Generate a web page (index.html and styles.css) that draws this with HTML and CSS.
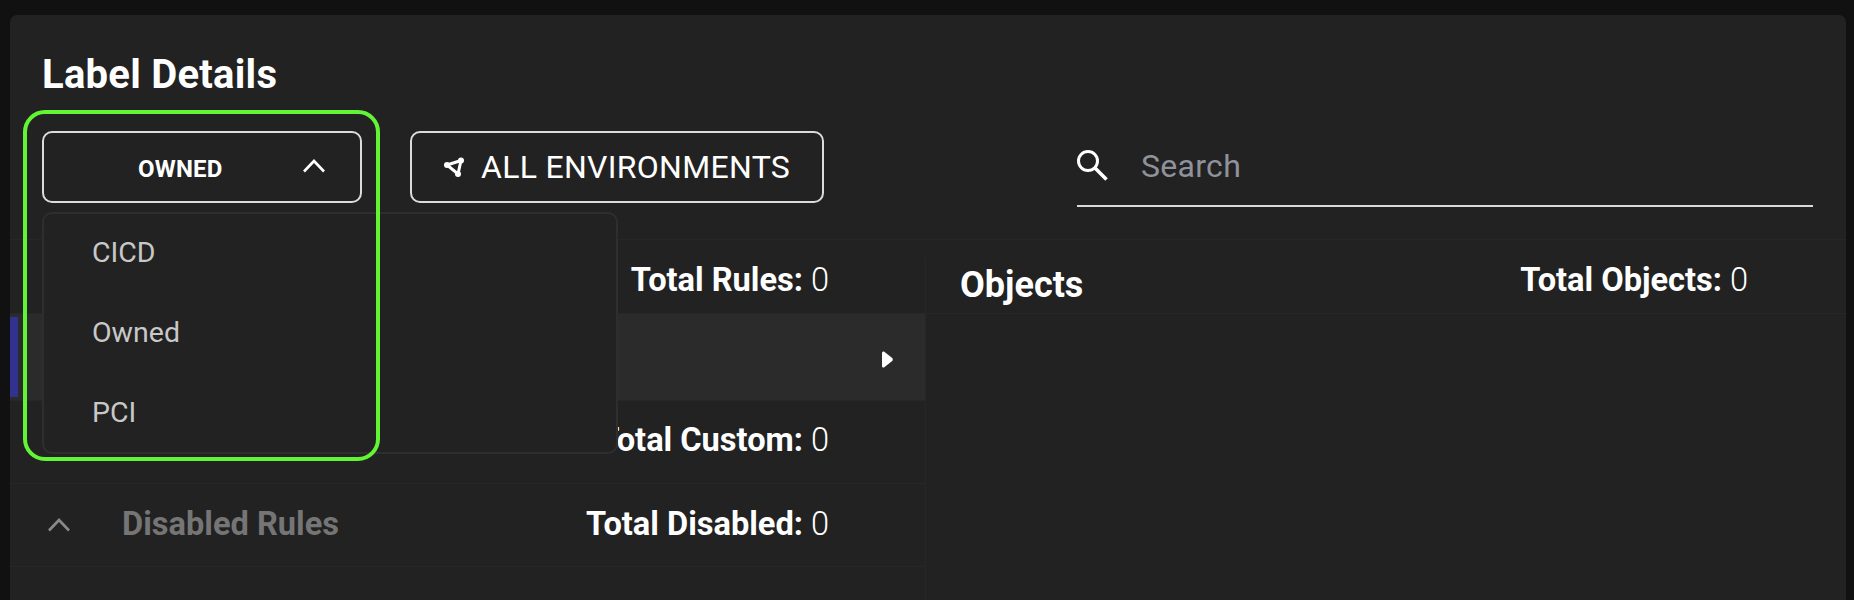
FILE: index.html
```html
<!DOCTYPE html>
<html lang="en">

<head>
    <title>Label Details</title>
    <link rel="stylesheet" href="styles.css">
</head>

<body>
    <div class="panel">
        <h1 class="title">Label Details</h1>

        <div class="toolbar">
            <button class="btn btn-select">
                <span class="select-text">OWNED</span>
                <svg class="select-chevron" width="22" height="14" viewBox="0 0 22 14">
                    <polyline points="1,12.5 11,2 21,12.5" fill="none" stroke="#fff" stroke-width="2.6" />
                </svg>
            </button>
            <button class="btn btn-env">
                <svg width="20" height="20" viewBox="0 0 20 20">
                    <polygon points="3,8 17,3.5 14,17" fill="none" stroke="#fff" stroke-width="3" />
                    <circle cx="3" cy="8" r="3" fill="#fff" />
                    <circle cx="17" cy="3.5" r="3" fill="#fff" />
                    <circle cx="14" cy="17" r="3" fill="#fff" />
                </svg>
                <span>ALL ENVIRONMENTS</span>
            </button>
            <div class="search">
                <svg width="31" height="31" viewBox="0 0 31 31">
                    <circle cx="11" cy="11" r="9.5" fill="none" stroke="#fff" stroke-width="3" />
                    <line x1="18" y1="18" x2="29.5" y2="29.5" stroke="#fff" stroke-width="3.6" />
                </svg>
                <span class="search-text">Search</span>
            </div>
        </div>

        <div class="columns">
            <div class="rules">
                <div class="rules-head">
                    <div class="total"><b>Total Rules:</b> 0</div>
                </div>
                <div class="row row-active">
                    <span class="row-bar"></span>
                    <svg class="row-arrow" width="11" height="17" viewBox="0 0 11 17">
                        <path d="M2 0.5 L10.5 7.2 Q11 8.5 10.5 9.8 L2 16.5 Q0 17 0 15 V2 Q0 0 2 0.5 Z" fill="#fff" />
                    </svg>
                </div>
                <div class="row row-custom">
                    <div class="total"><b>Total Custom:</b> 0</div>
                </div>
                <div class="row row-disabled">
                    <svg class="row-chevron" width="22" height="14" viewBox="0 0 22 14">
                        <polyline points="1,12.5 11,2 21,12.5" fill="none" stroke="#8a8a8a" stroke-width="2.6" />
                    </svg>
                    <span class="row-label">Disabled Rules</span>
                    <div class="total"><b>Total Disabled:</b> 0</div>
                </div>
            </div>

            <div class="objects">
                <div class="objects-head">
                    <div class="objects-title">Objects</div>
                    <div class="total"><b>Total Objects:</b> 0</div>
                </div>
            </div>
        </div>

        <ul class="menu">
            <li>CICD</li>
            <li>Owned</li>
            <li>PCI</li>
        </ul>

        <div class="highlight"></div>
    </div>
</body>

</html>
```

FILE: styles.css
```css
* {
    padding: 0;
    margin: 0;
    box-sizing: border-box;
}

body {
    height: 600px;
    overflow: hidden;
    background: #111111;
    padding: 15px 8px 0 10px;
    font-family: Roboto, sans-serif;
    color: #ffffff;
}

.panel {
    position: relative;
    height: 585px;
    background: #222222;
    border-radius: 7px 7px 0 0;
    overflow: hidden;
}

.title {
    padding: 39px 0 0 32px;
    font-size: 40px;
    line-height: 42px;
    font-weight: 700;
    letter-spacing: 0.25px;
}

.toolbar {
    display: flex;
    align-items: flex-start;
    margin-top: 35px;
    padding: 0 33px 32px 32px;
    border-bottom: 1px solid #272727;
}

.btn {
    display: flex;
    align-items: center;
    height: 72px;
    background: none;
    border: 2px solid #dcdcdc;
    border-radius: 10px;
    color: #ffffff;
    font-family: Roboto, sans-serif;
}

.btn-select {
    width: 320px;
    padding: 4px 35px 0 94px;
    justify-content: space-between;
}

.select-chevron {
    margin-top: -6px;
}

.select-text {
    font-size: 24px;
    font-weight: 700;
    letter-spacing: 0.2px;
}

.btn-env {
    width: 414px;
    margin-left: 48px;
    padding-left: 32px;
    gap: 17px;
    font-size: 32px;
    letter-spacing: 0.3px;
}

.search {
    display: flex;
    align-items: center;
    gap: 33px;
    width: 736px;
    height: 76px;
    margin-left: auto;
    padding-bottom: 5px;
    border-bottom: 2px solid #d6dadd;
}

.search-text {
    font-size: 32px;
    letter-spacing: 0.3px;
    color: #8f929c;
}

.columns {
    display: flex;
    height: 400px;
}

.rules {
    width: 915px;
}

.rules-head {
    display: flex;
    justify-content: flex-end;
    align-items: center;
    height: 74px;
    padding: 6px 96px 0 0;
    border-bottom: 1px solid #272727;
}

.total {
    font-size: 32.6px;
    font-weight: 300;
}

.total b {
    font-weight: 700;
}

.row {
    display: flex;
    align-items: center;
    justify-content: flex-end;
    height: 83px;
    padding-right: 96px;
    border-bottom: 1px solid #272727;
}

.row-active {
    height: 87px;
    padding-right: 32px;
    justify-content: space-between;
    background: #2b2b2b;
}

.row-arrow {
    margin-top: 4px;
}

.row-custom {
    padding-bottom: 5px;
}

.row-disabled {
    padding-bottom: 2px;
}

.row-bar {
    width: 8px;
    height: 80px;
    background: #31318f;
}

.row-chevron {
    margin: 2px 0 0 38px;
}

.row-label {
    margin-left: 52px;
    margin-right: auto;
    font-size: 32.6px;
    font-weight: 700;
    color: #757575;
}

.objects {
    flex: 1;
}

.objects-head {
    display: flex;
    justify-content: space-between;
    height: 74px;
    padding: 0 98px 0 0;
    border-bottom: 1px solid #272727;
}

.objects-title {
    display: flex;
    align-items: center;
    margin-top: 18px;
    padding: 0 0 2px 34px;
    border-left: 1px solid #272727;
    font-size: 36px;
    font-weight: 700;
}

.objects-head .total {
    align-self: center;
    padding-top: 6px;
}

.objects::after {
    content: "";
    display: block;
    height: 300px;
    border-left: 1px solid #272727;
}

.menu {
    position: absolute;
    top: 197px;
    left: 32px;
    width: 576px;
    height: 242px;
    padding-top: 0;
    list-style: none;
    background: #222222;
    border: 2px solid #2e2e2e;
    border-radius: 10px;
}

.menu li {
    display: flex;
    align-items: center;
    height: 80px;
    padding: 0 0 3px 48px;
    font-size: 28.5px;
    color: #c8c8c8;
}

.highlight {
    position: absolute;
    top: 95px;
    left: 13px;
    width: 357px;
    height: 351px;
    border: 4px solid #62f536;
    border-radius: 22px;
}
```
